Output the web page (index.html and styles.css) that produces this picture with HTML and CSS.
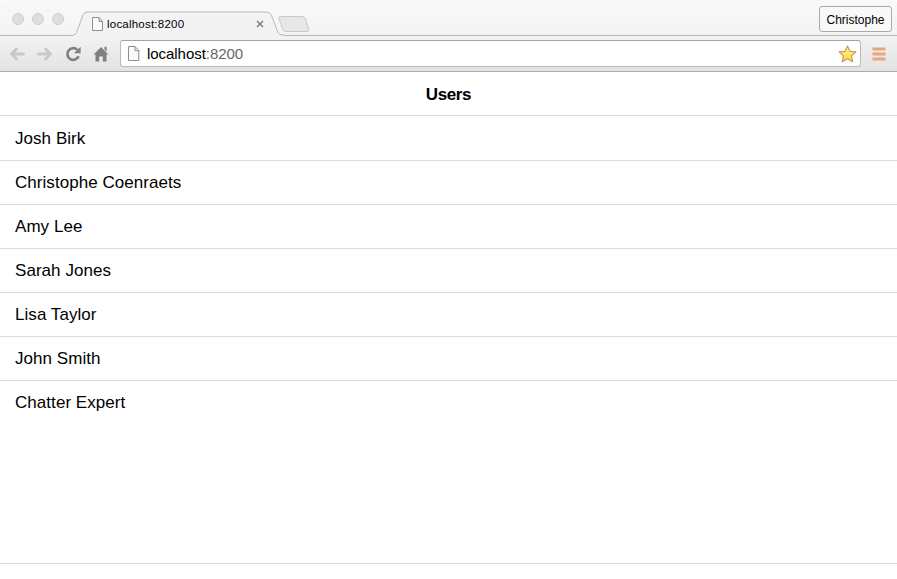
FILE: index.html
```html
<!DOCTYPE html>
<html lang="en">
<head>
<meta charset="utf-8">
<title>localhost:8200</title>
<link rel="stylesheet" href="styles.css">
</head>
<body>
<div class="browser">
  <div class="tab-strip">
    <div class="window-buttons"><span></span><span></span><span></span></div>
    <div class="tab">
      <svg class="tab-shape" width="212" height="26" viewBox="0 0 212 26"><path d="M0 26V24.5H0Q2.500 24.500 3.500 22L10 4.500Q11.500 1.500 14 1.500H193Q197 1.500 198.500 5L205 22Q206 24.500 209 24.500H212V26Z" fill="#f3f3f3"/><path d="M0 24.500Q2.500 24.500 3.500 22L10 4.500Q11.500 1.500 14 1.500H193Q197 1.500 198.500 5L205 22Q206 24.500 209 24.500H212" fill="none" stroke="#b9b9b9"/></svg>
      <svg class="page-icon" width="12" height="15" viewBox="0 0 12 15"><path d="M.5.5H7L10.500 4.500V13.500H.5ZM7 .5V4.500H10.500" fill="#fbfbfb" stroke="#919191"/></svg>
      <span class="tab-title">localhost:8200</span>
      <svg class="close" width="8" height="8" viewBox="0 0 8 8"><path d="M1 1L7 7M7 1L1 7" stroke="#777" stroke-width="1.400"/></svg>
    </div>
    <svg class="new-tab" width="34" height="18" viewBox="0 0 34 18"><path d="M3.500 1.500H25Q27.500 1.500 28.500 4L31.500 13Q32.500 16.500 30 16.500H9Q6.500 16.500 5.500 14L2 4Q1 1.500 3.500 1.500Z" fill="#e7e7e7" stroke="#c9c9c9"/></svg>
    <button class="profile">Christophe</button>
  </div>
  <div class="toolbar">
    <svg class="nav" width="16" height="14" viewBox="0 0 16 14"><path d="M14.500 7H3M7.500 2L2.500 7L7.500 12" fill="none" stroke="#c8c8c8" stroke-width="2.800" stroke-linecap="round" stroke-linejoin="round"/></svg>
    <svg class="nav" width="16" height="14" viewBox="0 0 16 14"><path d="M1.500 7H13M8.500 2L13.500 7L8.500 12" fill="none" stroke="#c8c8c8" stroke-width="2.800" stroke-linecap="round" stroke-linejoin="round"/></svg>
    <svg class="nav" width="16" height="16" viewBox="0 0 16 16"><path d="M12.300 3.900A5.800 5.800 0 1 0 13.600 10.200" fill="none" stroke="#808080" stroke-width="2.700"/><path d="M15.600.7V7.300H9Z" fill="#808080"/></svg>
    <svg class="nav" width="16" height="16" viewBox="0 0 16 16"><path d="M8 1L15.500 8.500H13.500V15.500H9.800V10.500H6.200V15.500H2.500V8.500H.5ZM11.500.7H13.600V5.500L11.500 3.500Z" fill="#808080"/></svg>
    <div class="address">
      <svg class="page-icon" width="12" height="16" viewBox="0 0 12 16"><path d="M.5.5H7L10.800 4.700V14.500H.5ZM7 .5V4.700H10.800" fill="#fbfbfb" stroke="#8c8c8c"/></svg>
      <span class="url">localhost<i>:8200</i></span>
      <svg class="star" width="19" height="18" viewBox="0 0 19 18"><defs><linearGradient id="gold" x2="0" y2="1"><stop stop-color="#fff49b"/><stop offset="1" stop-color="#f8d545"/></linearGradient></defs><path d="M9.500 1L11.900 6.300L17.900 6.900L13.500 10.900L14.700 16.800L9.500 13.800L4.300 16.800L5.500 10.900L1.100 6.900L7.100 6.300Z" fill="url(#gold)" stroke="#cf9a4c" stroke-width="1.200" stroke-linejoin="round"/></svg>
    </div>
    <svg class="menu" width="14" height="14" viewBox="0 0 14 14"><path d="M.5 2H13.500M.5 7H13.500M.5 12H13.500" stroke="#e8a679" stroke-width="2.800"/></svg>
  </div>
</div>
<main>
  <h1>Users</h1>
  <ul class="users">
    <li><span>Josh Birk</span></li>
    <li><span>Christophe Coenraets</span></li>
    <li><span>Amy Lee</span></li>
    <li><span>Sarah Jones</span></li>
    <li><span>Lisa Taylor</span></li>
    <li><span>John Smith</span></li>
    <li><span>Chatter Expert</span></li>
  </ul>
</main>
</body>
</html>
```
FILE: styles.css
```css
* { box-sizing: border-box; }
body {
  margin: 0;
  height: 579px;
  overflow: hidden;
  background: #fff;
  color: #000;
  font-family: "Liberation Sans", Arial, sans-serif;
}
svg { display: block; flex: none; }
.tab-strip {
  display: flex;
  align-items: flex-start;
  height: 36px;
  background: linear-gradient(#f9f9f9, #f4f4f4);
  border-bottom: 1px solid #b9b9b9;
  border-radius: 4px 4px 0 0;
}
.window-buttons { display: flex; gap: 8px; padding: 13px 0 0 12px; width: 73px; }
.window-buttons span {
  width: 12px;
  height: 12px;
  border: 1px solid #cfcfcf;
  border-radius: 50%;
  background: #dedede;
}
.tab {
  position: relative;
  display: flex;
  align-items: center;
  width: 205px;
  height: 26px;
  margin-top: 10px;
  padding: 2px 14px 0 19px;
}
.tab-shape { position: absolute; left: 0; top: 0; height: 27px; }
.tab > .page-icon, .tab-title, .close { position: relative; }
.tab-title { margin-left: 3px; font-size: 11.5px; line-height: 14px; letter-spacing: 0.22px; }
.close { margin-left: auto; }
.new-tab { margin: 15px 0 0 -1px; }
.profile {
  width: 73px;
  height: 26px;
  margin: 6px 5px 0 auto;
  padding: 2px 0 0;
  border: 1px solid #aaa;
  border-radius: 3px;
  background: #f8f8f8;
  color: #000;
  font: 12px "Liberation Sans", Arial, sans-serif;
}
.toolbar {
  display: flex;
  align-items: center;
  height: 36px;
  padding: 0 10px 0 9px;
  background: linear-gradient(#f3f3f3, #e3e3e3);
  border-bottom: 1px solid #adadad;
}
.nav { margin-right: 12px; }
.address {
  display: flex;
  align-items: center;
  flex: 1;
  height: 27px;
  margin-right: 11px;
  margin-left: -1px;
  padding: 0 3px 0 7px;
  border: 1px solid #bababa;
  border-top-color: #a2a2a2;
  border-radius: 3px;
  background: #fff;
}
.toolbar .menu { margin-right: 1px; }
.url { margin-left: 7px; font-size: 15px; line-height: 18px; letter-spacing: -0.05px; }
.url i { color: #686868; font-style: normal; }
.star { margin-left: auto; }
h1 {
  height: 44px;
  margin: 0;
  border-bottom: 1px solid #dcdcdc;
  font-size: 17px;
  line-height: 45px;
  letter-spacing: -0.4px;
  text-align: center;
}
.users {
  height: 448px;
  margin: 0;
  padding: 0;
  border-bottom: 1px solid #dcdcdc;
  list-style: none;
}
.users li {
  height: 44px;
  padding-left: 15px;
  border-bottom: 1px solid #dcdcdc;
  font-size: 17px;
  line-height: 44px;
  letter-spacing: 0.05px;
}
.users li:first-child { height: 45px; line-height: 46px; }
.users li:last-child { border-bottom: 0; }
```
